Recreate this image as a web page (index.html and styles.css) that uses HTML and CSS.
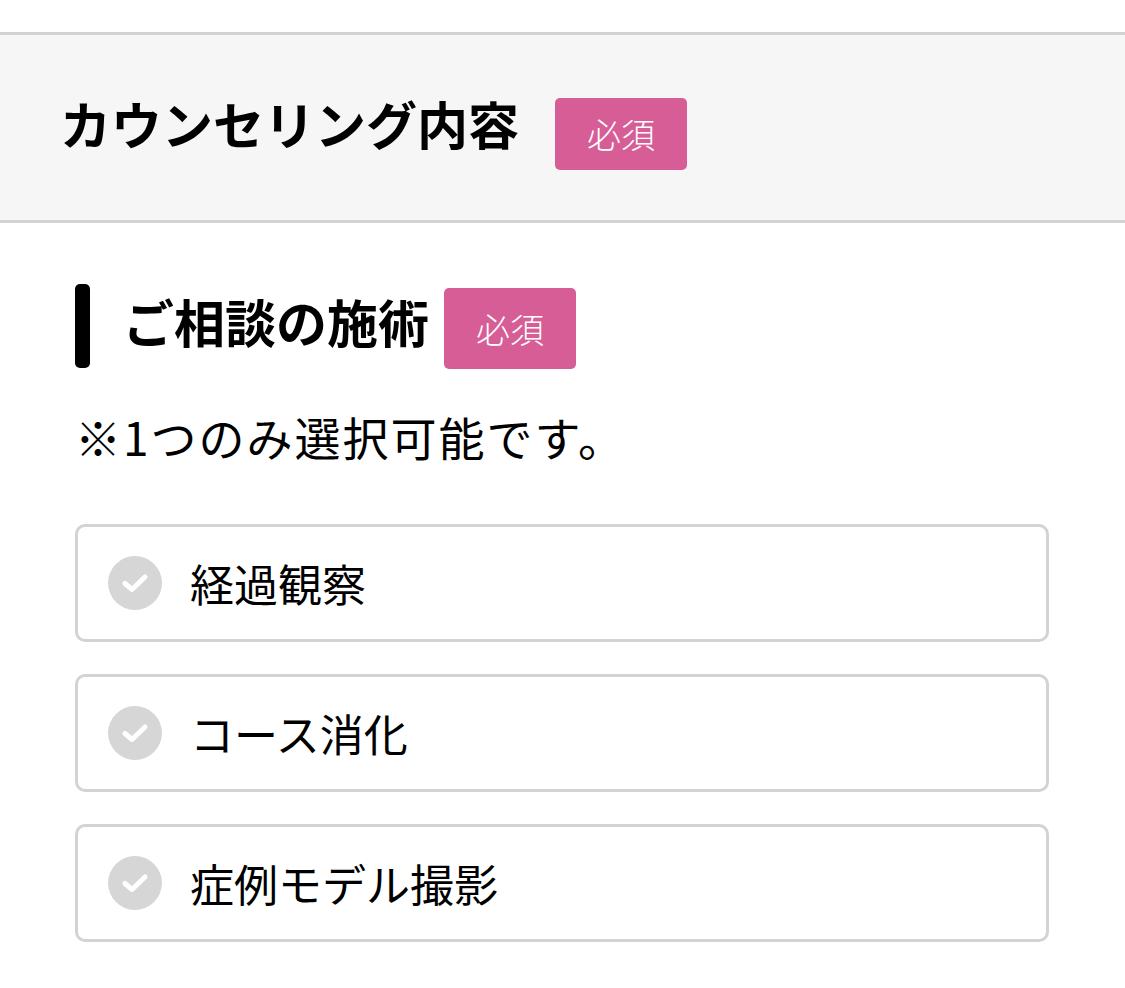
FILE: index.html
```html
<!DOCTYPE html>
<html lang="ja">
<head>
  <meta charset="UTF-8">
  <title>カウンセリング内容</title>
  <link rel="stylesheet" href="styles.css">
</head>
<body>
  <div class="section-head">
    <h2>カウンセリング内容</h2>
    <span class="required">必須</span>
  </div>

  <div class="field">
    <div class="field-label">
      <span class="bar"></span>
      <h3>ご相談の施術</h3>
      <span class="required tall">必須</span>
    </div>
    <p class="note">※1つのみ選択可能です。</p>

    <label class="option">
      <input type="radio" name="treatment" value="1">
      <span class="check">
        <svg viewBox="0 0 28 20" width="28" height="20"><path d="M4 10.5L11 16.5L24 4" fill="none" stroke="#fff" stroke-width="5" stroke-linecap="round" stroke-linejoin="round"/></svg>
      </span>
      <span class="option-text">経過観察</span>
    </label>
    <label class="option">
      <input type="radio" name="treatment" value="2">
      <span class="check">
        <svg viewBox="0 0 28 20" width="28" height="20"><path d="M4 10.5L11 16.5L24 4" fill="none" stroke="#fff" stroke-width="5" stroke-linecap="round" stroke-linejoin="round"/></svg>
      </span>
      <span class="option-text">コース消化</span>
    </label>
    <label class="option">
      <input type="radio" name="treatment" value="3">
      <span class="check">
        <svg viewBox="0 0 28 20" width="28" height="20"><path d="M4 10.5L11 16.5L24 4" fill="none" stroke="#fff" stroke-width="5" stroke-linecap="round" stroke-linejoin="round"/></svg>
      </span>
      <span class="option-text">症例モデル撮影</span>
    </label>
  </div>
</body>
</html>
```

FILE: styles.css
```css
body {
  margin: 0;
  padding-top: 32px;
  background: #fff;
  color: #000;
  font-family: "Noto Sans CJK JP", "Noto Sans", sans-serif;
}
.section-head {
  display: flex;
  align-items: center;
  height: 185px;
  padding-left: 60px;
  background: #f6f6f6;
  border-top: 3px solid #d3d3d3;
  border-bottom: 3px solid #d3d3d3;
}
.section-head h2 {
  margin: 0 36px 10px 0;
  font-size: 51px;
  font-weight: bold;
}
.required {
  display: inline-flex;
  align-items: center;
  justify-content: center;
  width: 132px;
  height: 72px;
  margin-top: 12px;
  background: #d65d96;
  color: #fff;
  font-size: 34px;
  font-weight: 300;
  border-radius: 5px;
}
.required.tall {
  height: 81px;
  margin-top: 4px;
}
.field {
  padding: 61px 76px 40px 75px;
}
.field-label {
  display: flex;
  align-items: center;
  height: 84px;
}
.bar {
  width: 15px;
  height: 84px;
  background: #000;
  border-radius: 5px;
  margin-right: 33px;
}
.field-label h3 {
  margin: 0 15px 10px 0;
  font-size: 51px;
  font-weight: bold;
}
.note {
  margin: 38px 0 58px 0;
  font-size: 46px;
  line-height: 60px;
  letter-spacing: 2px;
}
.option {
  display: flex;
  align-items: center;
  height: 112px;
  margin-bottom: 32px;
  padding-left: 30px;
  border: 3px solid #d3d3d3;
  border-radius: 10px;
  cursor: pointer;
}
.option input {
  display: none;
}
.check {
  display: flex;
  align-items: center;
  justify-content: center;
  width: 54px;
  height: 54px;
  margin-right: 28px;
  background: #d6d6d6;
  border-radius: 50%;
}
.option-text {
  font-size: 44px;
}
.option input:checked + .check {
  background: #d65d96;
}
```
